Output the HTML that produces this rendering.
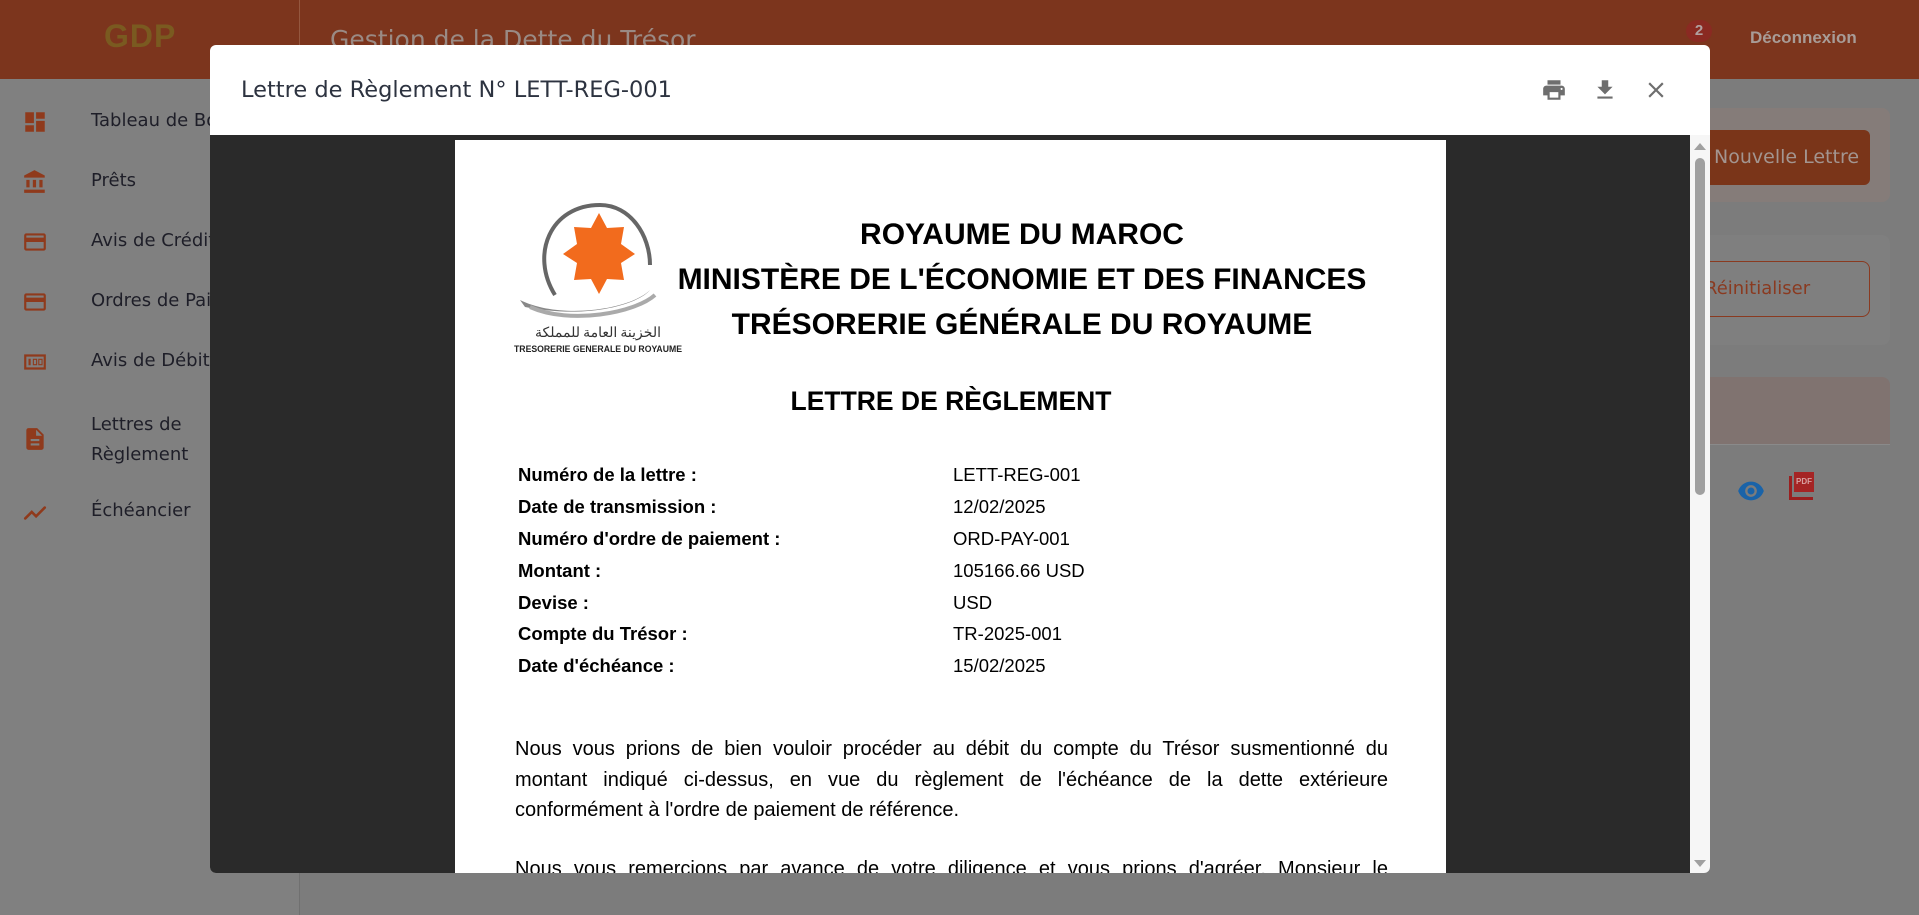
<!DOCTYPE html>
<html><head><meta charset="utf-8"><style>
*{margin:0;padding:0;box-sizing:border-box}
body{width:1919px;height:915px;overflow:hidden;position:relative;background:#7c7c7c;font-family:"Liberation Sans",sans-serif}
.abs{position:absolute}
.hdr{left:0;top:0;width:1919px;height:79px;background:#7c351d}
.side{left:0;top:79px;width:300px;height:836px;background:#808080;border-right:1px solid #707070}
.nav{position:absolute;left:91px;color:#1e1e28;font-family:"DejaVu Sans","Liberation Sans",sans-serif;font-size:18px}
.ic{position:absolute;left:22px;width:26px;height:26px}
.modal{left:210px;top:45px;width:1500px;height:828px;background:#fff;border-radius:6px;overflow:hidden}
.viewer{left:0;top:90px;width:1500px;height:738px;background:#2a2a2a}
.page{left:245px;top:5px;width:991px;height:740px;background:#fff;color:#000}
.h{position:absolute;font-weight:bold;text-align:center;white-space:nowrap}
.lab{position:absolute;left:63px;font-weight:bold;font-size:18.5px}
.val{position:absolute;left:498px;font-size:18.5px}
.para{position:absolute;left:60px;width:873px;font-size:20px;line-height:30.5px}
.j{display:block;text-align:justify;text-align-last:justify;white-space:nowrap}
.l{display:block;white-space:nowrap}
</style></head><body>
<div class="abs hdr"></div>
<div class="abs" style="left:104px;top:18px;font-size:32px;font-weight:bold;color:#7a5a20;letter-spacing:1px">GDP</div>
<div class="abs" style="left:299px;top:0;width:1px;height:79px;background:#94573f"></div>
<div class="abs" style="left:330px;top:25px;font-size:25px;color:#9a8a84;font-family:'DejaVu Sans',sans-serif">Gestion de la Dette du Trésor</div>
<div class="abs" style="left:1686px;top:20px;width:26px;height:22px;border-radius:11px;background:#8a2a22;color:#b0a0a0;font-size:15px;font-weight:bold;text-align:center;line-height:22px">2</div>
<div class="abs" style="left:1750px;top:28px;font-size:17px;font-weight:bold;color:#a89c97">Déconnexion</div>
<div class="abs side">
<svg class="ic" style="top:30px" viewBox="0 0 24 24" fill="#8f3a1c"><path d="M3 13h8V3H3v10zm0 8h8v-6H3v6zm10 0h8V11h-8v10zm0-18v6h8V3h-8z"/></svg>
<div class="nav" style="top:31px">Tableau de Bord</div>
<svg class="ic" style="top:90px" viewBox="0 0 24 24" fill="#8f3a1c"><path d="M4 10v7h3v-7H4zm6 0v7h3v-7h-3zM2 22h19v-3H2v3zm14-12v7h3v-7h-3zM11.5 1L2 6v2h19V6l-9.5-5z"/></svg>
<div class="nav" style="top:91px">Prêts</div>
<svg class="ic" style="top:150px" viewBox="0 0 24 24" fill="#8f3a1c"><path d="M20 4H4c-1.1 0-2 .9-2 2v12c0 1.1.9 2 2 2h16c1.1 0 2-.9 2-2V6c0-1.1-.9-2-2-2zm0 14H4v-6h16v6zm0-10H4V6h16v2z"/></svg>
<div class="nav" style="top:151px">Avis de Crédit</div>
<svg class="ic" style="top:210px" viewBox="0 0 24 24" fill="#8f3a1c"><path d="M20 4H4c-1.1 0-2 .9-2 2v12c0 1.1.9 2 2 2h16c1.1 0 2-.9 2-2V6c0-1.1-.9-2-2-2zm0 14H4v-6h16v6zm0-10H4V6h16v2z"/></svg>
<div class="nav" style="top:211px">Ordres de Paiement</div>
<svg class="ic" style="top:270px" viewBox="0 0 24 24" fill="#8f3a1c"><path d="M2 5h20v14H2V5zm2 2v10h16V7H4zm2 2h2v6H6zm4 0h4v6h-4zm1 1v4h2v-4zm4-1h4v6h-4zm1 1v4h2v-4z"/></svg>
<div class="nav" style="top:271px">Avis de Débit</div>
<svg class="ic" style="top:347px" viewBox="0 0 24 24" fill="#8f3a1c"><path d="M14 2H6c-1.1 0-2 .9-2 2v16c0 1.1.9 2 2 2h12c1.1 0 2-.9 2-2V8l-6-6zm2 16H8v-2h8v2zm0-4H8v-2h8v2zm-3-5V3.5L18.5 9H13z"/></svg>
<div class="nav" style="top:331px;line-height:30px">Lettres de<br>Règlement</div>
<svg class="ic" style="top:421px" viewBox="0 0 24 24" fill="none" stroke="#8f3a1c" stroke-width="2.4" stroke-linecap="round"><path d="M3 17l6-6 4 4 8-8"/></svg>
<div class="nav" style="top:421px">Échéancier</div>
</div>
<div class="abs" style="left:1700px;top:108px;width:190px;height:94px;background:#857c79;border-radius:8px"></div>
<div class="abs" style="left:1690px;top:130px;width:180px;height:55px;background:#7a3519;border-radius:6px;color:#a39590;font-size:19px;line-height:55px;padding-left:24px;font-family:'DejaVu Sans',sans-serif">Nouvelle Lettre</div>
<div class="abs" style="left:1700px;top:235px;width:190px;height:110px;background:#7f7f7f;border-radius:8px"></div>
<div class="abs" style="left:1680px;top:261px;width:190px;height:56px;border:1px solid #8a3a20;border-radius:8px;color:#8a3a20;font-size:18px;line-height:54px;padding-left:24px;font-family:'DejaVu Sans',sans-serif">Réinitialiser</div>
<div class="abs" style="left:1700px;top:377px;width:190px;height:158px;background:#7c7c7c;border-radius:8px;overflow:hidden"><div style="height:68px;background:#807370;border-bottom:1px solid #8a8a8a"></div></div>
<svg class="abs" style="left:1737px;top:480px" width="28" height="22" viewBox="0 0 24 18" fill="#1a63a8"><path d="M12 1C7 1 2.7 4.1 1 9c1.7 4.9 6 8 11 8s9.3-3.1 11-8c-1.7-4.9-6-8-11-8zm0 13a5 5 0 110-10 5 5 0 010 10zm0-8a3 3 0 100 6 3 3 0 000-6z"/></svg>
<div class="abs" style="left:1789px;top:476px;width:24px;height:24px;border-left:3px solid #9a1f1f;border-bottom:3px solid #9a1f1f"></div>
<div class="abs" style="left:1794px;top:472px;width:20px;height:20px;background:#a52424;color:#d8a0a0;font-size:8px;font-weight:bold;text-align:center;line-height:20px">PDF</div>

<div class="abs modal">
<div class="abs" style="left:31px;top:32px;color:#2d3340;font-family:'DejaVu Sans',sans-serif;font-size:22.5px">Lettre de Règlement N° LETT-REG-001</div>
<svg class="abs" style="left:1331px;top:32px" width="26" height="26" viewBox="0 0 24 24" fill="#6e6e6e"><path d="M19 8H5c-1.66 0-3 1.34-3 3v6h4v4h12v-4h4v-6c0-1.66-1.34-3-3-3zm-3 11H8v-5h8v5zm3-7c-.55 0-1-.45-1-1s.45-1 1-1 1 .45 1 1-.45 1-1 1zm-1-9H6v4h12V3z"/></svg>
<svg class="abs" style="left:1382px;top:32px" width="26" height="26" viewBox="0 0 24 24" fill="#6e6e6e"><path d="M19 9h-4V3H9v6H5l7 7 7-7zM5 18v2h14v-2H5z"/></svg>
<svg class="abs" style="left:1433px;top:32px" width="26" height="26" viewBox="0 0 24 24" fill="#6e6e6e"><path d="M19 6.41L17.59 5 12 10.59 6.41 5 5 6.41 10.59 12 5 17.59 6.41 19 12 13.41 17.59 19 19 17.59 13.41 12z"/></svg>
<div class="abs viewer">
<div class="abs" style="left:1480px;top:0;width:20px;height:738px;background:#f6f6f6"></div>
<div class="abs" style="left:1484px;top:8px;width:0;height:0;border-left:6px solid transparent;border-right:6px solid transparent;border-bottom:7px solid #a0a0a0"></div>
<div class="abs" style="left:1485px;top:23px;width:10px;height:337px;background:#a0a0a0;border-radius:5px"></div>
<div class="abs" style="left:1484px;top:725px;width:0;height:0;border-left:6px solid transparent;border-right:6px solid transparent;border-top:7px solid #a0a0a0"></div>
<div class="abs page">
<svg class="abs" style="left:55px;top:55px" width="180" height="160" viewBox="0 0 180 160">
<path d="M45 100 C20 60 40 10 90 10 C120 10 140 40 140 70" fill="none" stroke="#666" stroke-width="4"/>
<polygon fill="#f26b1d" points="89,18 97,33 114,32 111,49 125,59 111,68 114,85 97,84 89,99 81,84 64,85 67,68 53,59 67,49 64,32 81,33"/>
<path d="M10 105 C50 125 120 115 140 95 C130 108 80 125 15 112Z" fill="#888"/>
<path d="M20 112 C60 130 125 118 145 100" fill="none" stroke="#aaa" stroke-width="4"/>
<text x="88" y="142" font-size="14" text-anchor="middle" fill="#333" font-family="Noto Sans CJK SC,sans-serif">الخزينة العامة للمملكة</text>
<text x="88" y="157" font-size="9.5" font-weight="bold" text-anchor="middle" fill="#222" font-family="Liberation Sans Narrow,Liberation Sans,sans-serif" textLength="168" lengthAdjust="spacingAndGlyphs">TRESORERIE GENERALE DU ROYAUME</text>
</svg>
<div class="h" style="top:78px;left:167px;width:800px;font-size:30px">ROYAUME DU MAROC</div>
<div class="h" style="top:123px;left:167px;width:800px;font-size:30px">MINISTÈRE DE L'ÉCONOMIE ET DES FINANCES</div>
<div class="h" style="top:168px;left:167px;width:800px;font-size:30px">TRÉSORERIE GÉNÉRALE DU ROYAUME</div>
<div class="h" style="top:246px;font-size:26.5px;left:10px;width:972px">LETTRE DE RÈGLEMENT</div>
<div class="lab" style="top:324px">Numéro de la lettre :</div><div class="val" style="top:324px">LETT-REG-001</div>
<div class="lab" style="top:356px">Date de transmission :</div><div class="val" style="top:356px">12/02/2025</div>
<div class="lab" style="top:388px">Numéro d'ordre de paiement :</div><div class="val" style="top:388px">ORD-PAY-001</div>
<div class="lab" style="top:420px">Montant :</div><div class="val" style="top:420px">105166.66 USD</div>
<div class="lab" style="top:452px">Devise :</div><div class="val" style="top:452px">USD</div>
<div class="lab" style="top:483px">Compte du Trésor :</div><div class="val" style="top:483px">TR-2025-001</div>
<div class="lab" style="top:515px">Date d'échéance :</div><div class="val" style="top:515px">15/02/2025</div>
<div class="para" style="top:594px"><span class="j">Nous vous prions de bien vouloir procéder au débit du compte du Trésor susmentionné du</span><span class="j">montant indiqué ci-dessus, en vue du règlement de l'échéance de la dette extérieure</span><span class="l">conformément à l'ordre de paiement de référence.</span></div>
<div class="para" style="top:714px"><span class="j">Nous vous remercions par avance de votre diligence et vous prions d'agréer, Monsieur le</span><span class="l">Directeur, l'expression de nos salutations distinguées.</span></div>
</div>
</div>
</div>
</body></html>
